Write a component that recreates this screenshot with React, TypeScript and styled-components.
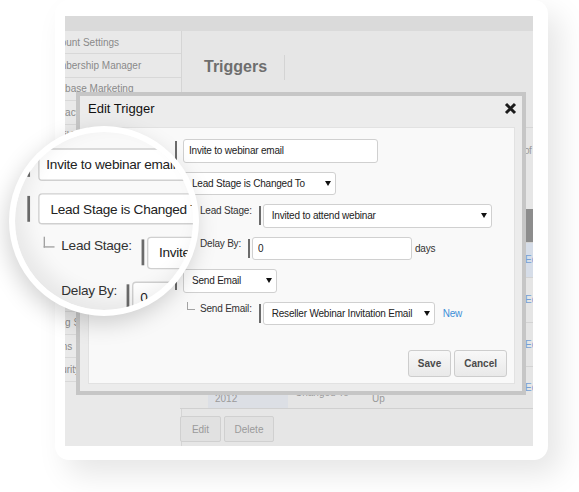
import React from 'react'
import styled, { createGlobalStyle } from 'styled-components'

const GlobalStyle = createGlobalStyle`
  html, body {
    margin: 0;
    padding: 0;
    background: #fff;
  }
  body {
    font-family: "Liberation Sans", Arial, sans-serif;
  }
  * {
    box-sizing: border-box;
  }
`

const Stage = styled.div`
  position: relative;
  width: 579px;
  height: 492px;
  overflow: hidden;
  background: #fff;
`
const Card = styled.div`
  width: 493px;
  height: 460px;
  margin-left: 55px;
  padding: 16px 15px 14px 10px;
  border-radius: 14px;
  background: #fff;
  box-shadow: 12px 14px 30px rgba(0, 0, 0, 0.1);
`
const Shot = styled.div`
  position: relative;
  display: flex;
  flex-direction: column;
  width: 468px;
  height: 430px;
  overflow: hidden;
  background: #e6e6e6;
`
const TopBar = styled.div`
  flex: none;
  height: 15px;
  background: #dadada;
`
const ShotBody = styled.div`
  display: flex;
  flex: 1;
  min-height: 0;
`

/* sidebar */
const Sidebar = styled.nav`
  flex: none;
  width: 117px;
  overflow: hidden;
  background: #e9e9e9;
  border-right: 1px solid #d5d5d5;
`
const SideItem = styled.div`
  display: flex;
  align-items: center;
  height: 23.4px;
  margin-left: -21px;
  border-bottom: 1px solid #d8d8d8;
  font-size: 10px;
  color: #8a8a8a;
  white-space: nowrap;
`

/* main page */
const Main = styled.main`
  display: flex;
  flex-direction: column;
  flex: 1;
  min-width: 0;
`
const PageHead = styled.header`
  flex: none;
  height: 97px;
  padding: 26px 0 0 22px;
  border-bottom: 1px solid #d6d6d6;
`
const TitleRow = styled.div`
  display: flex;
  align-items: center;
  height: 20px;
`
const Title = styled.h1`
  margin: 0;
  font-size: 16px;
  line-height: 20px;
  font-weight: bold;
  color: #6e6e6e;
`
const TitleRule = styled.span`
  width: 1px;
  height: 25px;
  margin-left: 17px;
  background: #d4d4d4;
`
const InfoRow = styled.div`
  flex: none;
  height: 81px;
  padding: 17px 0 0 279px;
  font-size: 10px;
  line-height: 12px;
  letter-spacing: -0.4px;
  color: #9a9a9a;
  white-space: nowrap;
`
const Table = styled.div`
  display: flex;
  flex-direction: column;
  width: 382px;
  margin-left: -2px;
  border-bottom: 1px solid #d0d0d0;
`
const cols = '28px 80px 77px 75px 78px 44px'
const HeadRow = styled.div`
  display: grid;
  grid-template-columns: ${cols};
  height: 33px;
  background: #8d8d8d;
  color: #fff;
  font-size: 10px;
  font-weight: bold;
  align-items: center;
`
const Row = styled.div<{ $h: number; $sel?: boolean }>`
  display: grid;
  grid-template-columns: ${cols};
  height: ${({ $h }) => $h}px;
  background: ${({ $sel }) => ($sel ? '#d6dde8' : '#e5e5e5')};
  border-top: 1px solid #d3d3d3;
`
const Cell = styled.div<{ $end?: boolean; $pb?: number; $hl?: boolean }>`
  display: flex;
  flex-direction: column;
  justify-content: ${({ $end }) => ($end ? 'flex-end' : 'center')};
  padding: 0 4px ${({ $pb }) => $pb ?? 0}px 7px;
  background: ${({ $hl }) => ($hl ? '#dcdfe5' : 'transparent')};
  font-size: 10px;
  line-height: 12px;
  color: #9a9a9a;
  white-space: nowrap;
  overflow: hidden;
`
const HeadCell = styled.div`
  padding-left: 7px;
`
const RowLink = styled.a`
  color: #74a0d6;
  text-decoration: none;
`
const ActionRow = styled.div`
  display: flex;
  gap: 3px;
  margin: 7px 0 0 -2px;
`
const GhostButton = styled.button<{ $w: number }>`
  width: ${({ $w }) => $w}px;
  height: 26px;
  padding: 0;
  border: 1px solid #d0d0d0;
  border-radius: 2px;
  background: #e1e1e1;
  font-family: inherit;
  font-size: 10px;
  color: #9a9a9a;
`

/* modal */
const Modal = styled.div`
  position: absolute;
  left: 11px;
  top: 76px;
  display: flex;
  flex-direction: column;
  width: 450px;
  height: 303px;
  padding: 0 7px 7px 8px;
  border: 4px solid #c6c6c6;
  background: #ececec;
`
const ModalHeader = styled.div`
  display: flex;
  align-items: flex-start;
  justify-content: space-between;
  height: 31px;
  padding-top: 5px;
  margin-right: -2px;
`
const ModalTitle = styled.h2`
  margin: 0;
  font-size: 13px;
  line-height: 15px;
  font-weight: normal;
  color: #111;
`
const CloseButton = styled.button`
  display: flex;
  align-items: center;
  justify-content: center;
  width: 13px;
  height: 15px;
  padding: 0;
  border: 0;
  background: none;
`
const FormBody = styled.div<{ $bare?: boolean }>`
  display: flex;
  flex-direction: column;
  gap: 9px;
  width: 427px;
  height: 257px;
  padding: 11px 7px 0 0;
  border: 1px solid ${({ $bare }) => ($bare ? 'transparent' : '#e2e2e2')};
  background: ${({ $bare }) => ($bare ? 'transparent' : '#f9f9f9')};
  font-size: 10px;
  letter-spacing: -0.2px;
  color: #222;
`
const MainRow = styled.div`
  display: flex;
  align-items: center;
  height: 23.5px;
  padding-left: 86px;
`
const SubRow = styled.div`
  display: flex;
  align-items: center;
  height: 23.5px;
  padding-left: 98px;
`
const Corner = styled.span<{ $off?: boolean }>`
  align-self: flex-start;
  flex: none;
  width: 8px;
  height: 8px;
  margin-right: 5px;
  border-left: 1px solid #a3a3a3;
  border-bottom: 1px solid #a3a3a3;
  visibility: ${({ $off }) => ($off ? 'hidden' : 'visible')};
`
const FieldLabel = styled.label`
  align-self: flex-start;
  padding-top: 1px;
  margin-right: 7px;
  line-height: 12px;
  color: #333;
  white-space: nowrap;
`
const Bar = styled.span<{ $gap: number }>`
  flex: none;
  width: 2px;
  height: 19px;
  margin-right: ${({ $gap }) => $gap}px;
  background: #6b6b6b;
`
const TextInput = styled.input<{ $w: number }>`
  width: ${({ $w }) => $w}px;
  height: 23.5px;
  padding: 0 5px;
  border: 1px solid #d0d0d0;
  border-radius: 3px;
  background: #fff;
  font-family: inherit;
  font-size: 10px;
  letter-spacing: -0.2px;
  color: #222;
  outline: none;
`
const SelectBox = styled.div<{ $w: number }>`
  display: flex;
  align-items: center;
  justify-content: space-between;
  flex: none;
  width: ${({ $w }) => $w}px;
  height: 23.5px;
  padding: 0 4px 0 8px;
  border: 1px solid #d0d0d0;
  border-radius: 3px;
  background: #fff;
  white-space: nowrap;
  overflow: hidden;
`
const Unit = styled.span`
  margin-left: 3px;
  color: #333;
`
const NewLink = styled.a`
  margin-left: 8px;
  color: #3d8fd8;
  text-decoration: none;
`
const ButtonRow = styled.div`
  display: flex;
  justify-content: flex-end;
  gap: 3px;
  margin-top: 16px;
`
const DialogButton = styled.button`
  height: 27px;
  padding: 0 9px;
  border: 1px solid #cdcdcd;
  border-radius: 3px;
  background: linear-gradient(#f8f8f8, #e9e9e9);
  font-family: inherit;
  font-size: 10px;
  font-weight: bold;
  color: #4a4a4a;
`

/* magnifier */
const Lens = styled.div`
  position: absolute;
  left: 9px;
  top: 126px;
  width: 190px;
  height: 190px;
  overflow: hidden;
  border: 6px solid #fff;
  border-radius: 50%;
  background: #f9f9f9;
  box-shadow: -3px 8px 22px rgba(0, 0, 0, 0.17);

  &::after {
    content: '';
    position: absolute;
    inset: 0;
    border-radius: 50%;
    box-shadow: inset 8px -10px 20px rgba(0, 0, 0, 0.07);
    pointer-events: none;
  }
`
const LensView = styled.div`
  position: absolute;
  left: 0;
  top: 0;
  transform-origin: 0 0;
  transform: translate(-106px, 0) scale(1.36);
`

const sideItems = [
  'Account Settings',
  'Membership Manager',
  'Database Marketing',
  'Contact Manager',
  'Email Templates',
  'Landing Pages',
  'Lead Scoring',
  'Lead Stages',
  'Triggers',
  'Web Tracking',
  'Reports',
  'Integrations',
  'Billing Settings',
  'Forms',
  'Security',
]

type TRow = {
  h: number
  sel?: boolean
  date: string[]
  trigger: string[]
  action: string[]
  status: string
  last?: boolean
}

const rows: TRow[] = [
  { h: 35, sel: true, date: ['Jan 12, 2012'], trigger: ['Form Submitted'], action: ['Add to List'], status: 'Active' },
  { h: 45, date: ['Feb 2,', '2012'], trigger: ['Email Opened'], action: ['Notify Owner'], status: 'Active' },
  { h: 44, date: ['Feb 20,', '2012'], trigger: ['Page Visited'], action: ['Score +10'], status: 'Paused' },
  { h: 42, date: ['Mar 3,', '2012'], trigger: ['Lead Stage is', 'Changed To'], action: ['Send Follow', 'Up'], status: 'Active', last: true },
]

const Caret = () => (
  <svg width="6" height="5" viewBox="0 0 6 5">
    <path d="M0 0H6L3 5Z" fill="#111" />
  </svg>
)

function Select({ w, children }: { w: number; children: React.ReactNode }) {
  return (
    <SelectBox $w={w}>
      <span>{children}</span>
      <Caret />
    </SelectBox>
  )
}

function TriggerForm({ bare }: { bare?: boolean }) {
  return (
    <FormBody $bare={bare}>
      <MainRow>
        <Bar $gap={6} />
        <TextInput $w={195} value="Invite to webinar email" readOnly />
      </MainRow>
      <MainRow>
        <Bar $gap={6} />
        <Select w={153}>Lead Stage is Changed To</Select>
      </MainRow>
      <SubRow>
        <Corner />
        <FieldLabel>Lead Stage:</FieldLabel>
        <Bar $gap={2} />
        <Select w={229}>Invited to attend webinar</Select>
      </SubRow>
      <SubRow>
        <Corner $off />
        <FieldLabel>Delay By:</FieldLabel>
        <Bar $gap={2} />
        <TextInput $w={160} value="0" readOnly />
        <Unit>days</Unit>
      </SubRow>
      <MainRow>
        <Bar $gap={6} />
        <Select w={94}>Send Email</Select>
      </MainRow>
      <SubRow>
        <Corner />
        <FieldLabel>Send Email:</FieldLabel>
        <Bar $gap={2} />
        <Select w={172}>Reseller Webinar Invitation Email</Select>
        <NewLink href="#">New</NewLink>
      </SubRow>
      <ButtonRow>
        <DialogButton>Save</DialogButton>
        <DialogButton>Cancel</DialogButton>
      </ButtonRow>
    </FormBody>
  )
}

const Lines = ({ lines }: { lines: string[] }) => (
  <>
    {lines.map((l) => (
      <span key={l}>{l}</span>
    ))}
  </>
)

export default function App() {
  return (
    <>
      <GlobalStyle />
      <Stage>
        <Card>
          <Shot>
            <TopBar />
            <ShotBody>
              <Sidebar>
                {sideItems.map((item) => (
                  <SideItem key={item}>{item}</SideItem>
                ))}
              </Sidebar>
              <Main>
                <PageHead>
                  <TitleRow>
                    <Title>Triggers</Title>
                    <TitleRule />
                  </TitleRow>
                </PageHead>
                <InfoRow>Showing 1 to 4 of 4 entries</InfoRow>
                <Table>
                  <HeadRow>
                    <HeadCell />
                    <HeadCell>Date</HeadCell>
                    <HeadCell>Trigger</HeadCell>
                    <HeadCell>Action</HeadCell>
                    <HeadCell>Status</HeadCell>
                    <HeadCell />
                  </HeadRow>
                  {rows.map((r) => (
                    <Row key={r.date.join()} $h={r.h} $sel={r.sel}>
                      <Cell />
                      <Cell $hl={!r.sel} $end={r.last} $pb={r.last ? 3 : 0}>
                        <Lines lines={r.date} />
                      </Cell>
                      <Cell $end={r.last} $pb={r.last ? 9 : 0}>
                        <Lines lines={r.trigger} />
                      </Cell>
                      <Cell $end={r.last} $pb={r.last ? 3 : 0}>
                        <Lines lines={r.action} />
                      </Cell>
                      <Cell>{r.status}</Cell>
                      <Cell>
                        <RowLink href="#">Edit</RowLink>
                      </Cell>
                    </Row>
                  ))}
                </Table>
                <ActionRow>
                  <GhostButton $w={41}>Edit</GhostButton>
                  <GhostButton $w={50}>Delete</GhostButton>
                </ActionRow>
              </Main>
            </ShotBody>

            <Modal>
              <ModalHeader>
                <ModalTitle>Edit Trigger</ModalTitle>
                <CloseButton aria-label="Close">
                  <svg width="13" height="13" viewBox="0 0 13 13">
                    <path d="M2 2L11 11M11 2L2 11" stroke="#1b1b1b" strokeWidth="3" />
                  </svg>
                </CloseButton>
              </ModalHeader>
              <TriggerForm />
            </Modal>
          </Shot>
        </Card>

        <Lens>
          <LensView>
            <TriggerForm bare />
          </LensView>
        </Lens>
      </Stage>
    </>
  )
}
